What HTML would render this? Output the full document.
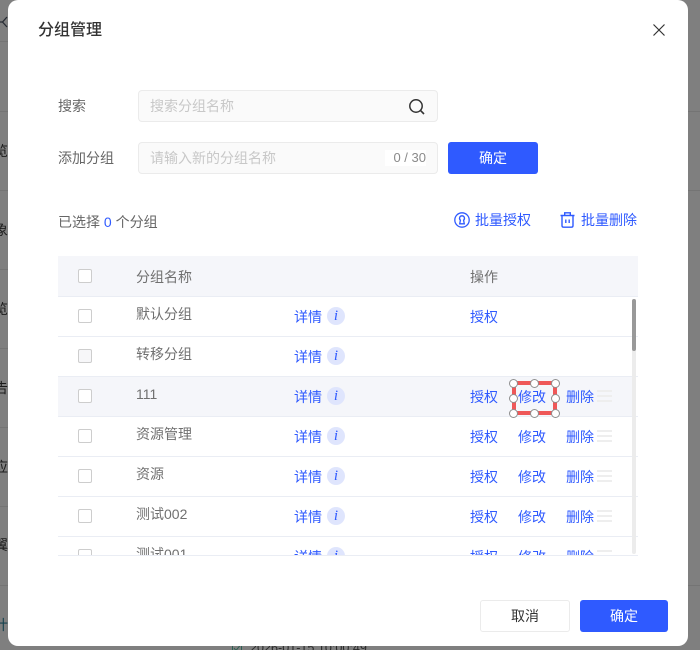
<!DOCTYPE html>
<html><head><meta charset="utf-8">
<style>
*{box-sizing:border-box;margin:0;padding:0}
html,body{width:700px;height:650px;overflow:hidden;background:#7f7f7f;font-family:"Liberation Sans","Noto Sans CJK SC",sans-serif;font-size:14px}
#root{position:relative;width:700px;height:650px;overflow:hidden;background:#7f7f7f}
.a{position:absolute;white-space:nowrap;line-height:20px}
.bg{color:#1c1c1c}
.line{position:absolute;background:#747474;height:1px}
#m{position:absolute;left:8px;top:0;width:680px;height:646px;background:#fff;border-radius:10px}
.inp{position:absolute;left:138px;width:300px;height:32px;background:#fafafa;border:1px solid #ebebeb;border-radius:4px}
.ph{color:#c8c8c8}
.lab{color:#666}
.b{color:#2f5aff}
.btn{position:absolute;background:#2f5aff;color:#fff;border-radius:3px;text-align:center;height:32px;line-height:32px;width:90px}
.rowline{position:absolute;left:58px;width:580px;height:1px;background:#eaedf4}
.cb{position:absolute;left:78px;width:14px;height:14px;border:1px solid #cdcdcd;border-radius:2px;background:#fff}
.nm{position:absolute;left:136px;color:#707070;line-height:20px;white-space:nowrap}
.i{position:absolute;left:327px;width:18px;height:18px;border-radius:50%;background:#dfe5fd;color:#2f5aff;font:italic 15px/18px "Liberation Serif",serif;text-align:center}
.h{position:absolute;left:597px;width:15px;height:12px;border-top:2px solid #eeeeee;border-bottom:2px solid #eeeeee}
.h:after{content:"";position:absolute;left:0;right:0;top:3px;height:2px;background:#eeeeee}
.p{position:absolute;width:9px;height:9px;border-radius:50%;background:#fff;border:1.5px solid #8f8f8f}
</style></head><body>
<div id="root">
<div class="line" style="left:0;top:41px;width:8px"></div>
<div class="line" style="left:0;top:111px;width:8px"></div>
<div class="line" style="left:0;top:190px;width:8px"></div>
<div class="line" style="left:0;top:269px;width:8px"></div>
<div class="line" style="left:0;top:348px;width:8px"></div>
<div class="line" style="left:0;top:427px;width:8px"></div>
<div class="line" style="left:0;top:506px;width:8px"></div>
<div class="line" style="left:0;top:585px;width:8px"></div>
<div class="line" style="left:688px;top:111px;width:12px"></div>
<div class="line" style="left:688px;top:190px;width:12px"></div>
<div class="line" style="left:688px;top:585px;width:12px"></div>
<svg style="position:absolute;left:0;top:15px" width="8" height="14" viewBox="0 0 8 14"><path d="M0 7H2.500L7 2M2.500 7L7 12" fill="none" stroke="#262b33" stroke-width="1.300"/></svg>
<div class="a bg" style="left:-6px;top:141px">览</div>
<div class="a bg" style="left:-6px;top:220px">象</div>
<div class="a bg" style="left:-6px;top:299px">览</div>
<div class="a bg" style="left:-6px;top:378px">告</div>
<div class="a bg" style="left:-6px;top:457px">应</div>
<div class="a bg" style="left:-6px;top:535px">翼</div>
<div class="a" style="left:-6px;top:615px;color:#17424f">计</div>
<svg style="position:absolute;left:232px;top:643px" width="10" height="10" viewBox="0 0 10 10"><rect x=".5" y=".5" width="9" height="9" fill="none" stroke="#2e5f52"/><path d="M2 5L4 7.500L8 2.500" fill="none" stroke="#2e5f52"/></svg>
<div class="a" style="left:250px;top:638px;color:#2b2b2b;font-size:12.600px">2026-01-15 10:00:49</div>
<div id="m"></div>
<div style="position:absolute;left:0;top:0;width:700px;height:650px">
<div class="a" style="left:38px;top:20px;font-size:16px;line-height:22px;color:#333;font-weight:500">分组管理</div>
<svg style="position:absolute;left:652px;top:23px" width="14" height="14" viewBox="0 0 14 14"><path d="M1.500 1.500L12.500 12.500M12.500 1.500L1.500 12.500" stroke="#333" stroke-width="1.200" fill="none"/></svg>

<div class="a lab" style="left:58px;top:96px">搜索</div>
<div class="inp" style="top:90px"></div>
<div class="a ph" style="left:150px;top:96px">搜索分组名称</div>
<svg style="position:absolute;left:408px;top:98px" width="18" height="18" viewBox="0 0 18 18"><circle cx="8" cy="8" r="6.200" fill="none" stroke="#333" stroke-width="1.500"/><path d="M12.600 12.600L16 16" stroke="#333" stroke-width="1.600" fill="none"/></svg>

<div class="a lab" style="left:58px;top:148px">添加分组</div>
<div class="inp" style="top:142px"></div>
<div class="a ph" style="left:150px;top:148px">请输入新的分组名称</div>
<div class="a" style="left:385px;top:150px;width:41px;height:16px;background:#fff;line-height:16px;text-align:right;color:#8a8a8a;font-size:13px">0 / 30</div>
<div class="btn" style="left:448px;top:142px">确定</div>

<div class="a lab" style="left:58px;top:212px">已选择 <span class="b">0</span> 个分组</div>

<svg style="position:absolute;left:454px;top:212px" width="16" height="16" viewBox="0 0 16 16"><circle cx="8" cy="8" r="7.200" fill="none" stroke="#2f5aff" stroke-width="1.300"/><path d="M8 3.800A2.500 2.500 0 0 1 9.600 8.200L10.300 11.800H5.700L6.400 8.200A2.500 2.500 0 0 1 8 3.800Z" fill="none" stroke="#2f5aff" stroke-width="1.300"/></svg>
<div class="a b" style="left:475px;top:210px">批量授权</div>
<svg style="position:absolute;left:560px;top:212px" width="15" height="16" viewBox="0 0 15 16"><path d="M.5 3.500H14.500M4.700 3V.8H10.300V3M2 3.500V13.600C2 14.600 2.600 15.200 3.600 15.200H11.400C12.400 15.200 13 14.600 13 13.600V3.500M5.800 7.500V11M9.200 7.500V11" fill="none" stroke="#2f5aff" stroke-width="1.400"/></svg>
<div class="a b" style="left:581px;top:210px">批量删除</div>

<!-- table -->
<div style="position:absolute;left:58px;top:256px;width:580px;height:40px;background:#f5f6fa"></div>
<div style="position:absolute;left:58px;top:377px;width:574px;height:39px;background:#f5f6fa"></div>
<div class="rowline" style="top:296px"></div>
<div class="rowline" style="top:336px"></div>
<div class="rowline" style="top:376px"></div>
<div class="rowline" style="top:416px"></div>
<div class="rowline" style="top:456px"></div>
<div class="rowline" style="top:496px"></div>
<div class="rowline" style="top:536px"></div>

<div class="cb" style="top:269px"></div>
<div class="nm" style="top:267px">分组名称</div>
<div class="nm" style="left:470px;top:267px">操作</div>

<div style="position:absolute;left:0;top:297px;width:700px;height:258px;overflow:hidden">
<div class="cb" style="top:12px"></div><div class="nm" style="top:7px">默认分组</div>
<div class="a b" style="left:294px;top:10px">详情</div><div class="i" style="top:10px">i</div>
<div class="a b" style="left:470px;top:10px">授权</div>

<div class="cb" style="top:52px;background:#f7f7f9"></div><div class="nm" style="top:47px">转移分组</div>
<div class="a b" style="left:294px;top:50px">详情</div><div class="i" style="top:50px">i</div>

<div class="cb" style="top:92px"></div><div class="nm" style="top:87px">111</div>
<div class="a b" style="left:294px;top:90px">详情</div><div class="i" style="top:90px">i</div>
<div class="a b" style="left:470px;top:90px">授权</div><div class="a b" style="left:518px;top:90px">修改</div><div class="a b" style="left:566px;top:90px">删除</div><div class="h" style="top:93px"></div>

<div class="cb" style="top:132px"></div><div class="nm" style="top:127px">资源管理</div>
<div class="a b" style="left:294px;top:130px">详情</div><div class="i" style="top:130px">i</div>
<div class="a b" style="left:470px;top:130px">授权</div><div class="a b" style="left:518px;top:130px">修改</div><div class="a b" style="left:566px;top:130px">删除</div><div class="h" style="top:133px"></div>

<div class="cb" style="top:172px"></div><div class="nm" style="top:167px">资源</div>
<div class="a b" style="left:294px;top:170px">详情</div><div class="i" style="top:170px">i</div>
<div class="a b" style="left:470px;top:170px">授权</div><div class="a b" style="left:518px;top:170px">修改</div><div class="a b" style="left:566px;top:170px">删除</div><div class="h" style="top:173px"></div>

<div class="cb" style="top:212px"></div><div class="nm" style="top:207px">测试002</div>
<div class="a b" style="left:294px;top:210px">详情</div><div class="i" style="top:210px">i</div>
<div class="a b" style="left:470px;top:210px">授权</div><div class="a b" style="left:518px;top:210px">修改</div><div class="a b" style="left:566px;top:210px">删除</div><div class="h" style="top:213px"></div>

<div class="cb" style="top:252px"></div><div class="nm" style="top:247px">测试001</div>
<div class="a b" style="left:294px;top:250px">详情</div><div class="i" style="top:250px">i</div>
<div class="a b" style="left:470px;top:250px">授权</div><div class="a b" style="left:518px;top:250px">修改</div><div class="a b" style="left:566px;top:250px">删除</div><div class="h" style="top:253px"></div>
</div>
<div class="rowline" style="top:555px"></div>

<!-- scrollbar -->
<div style="position:absolute;left:632px;top:299px;width:4px;height:255px;background:#ececec;border-radius:2px"></div>
<div style="position:absolute;left:632px;top:299px;width:4px;height:52px;background:#999;border-radius:2px"></div>

<!-- selection -->
<div style="position:absolute;left:512px;top:381px;width:45px;height:34px;border:4px solid #ef5858"></div>
<div class="p" style="left:509px;top:379px"></div><div class="p" style="left:530px;top:379px"></div><div class="p" style="left:551px;top:379px"></div>
<div class="p" style="left:509px;top:394px"></div><div class="p" style="left:551px;top:394px"></div>
<div class="p" style="left:509px;top:409px"></div><div class="p" style="left:530px;top:409px"></div><div class="p" style="left:551px;top:409px"></div>

<!-- footer -->
<div class="btn" style="left:480px;top:600px;background:#fff;border:1px solid #ebebeb;color:#333;line-height:30px">取消</div>
<div class="btn" style="left:580px;top:600px;width:88px">确定</div>
</div>
</div>
</body></html>
